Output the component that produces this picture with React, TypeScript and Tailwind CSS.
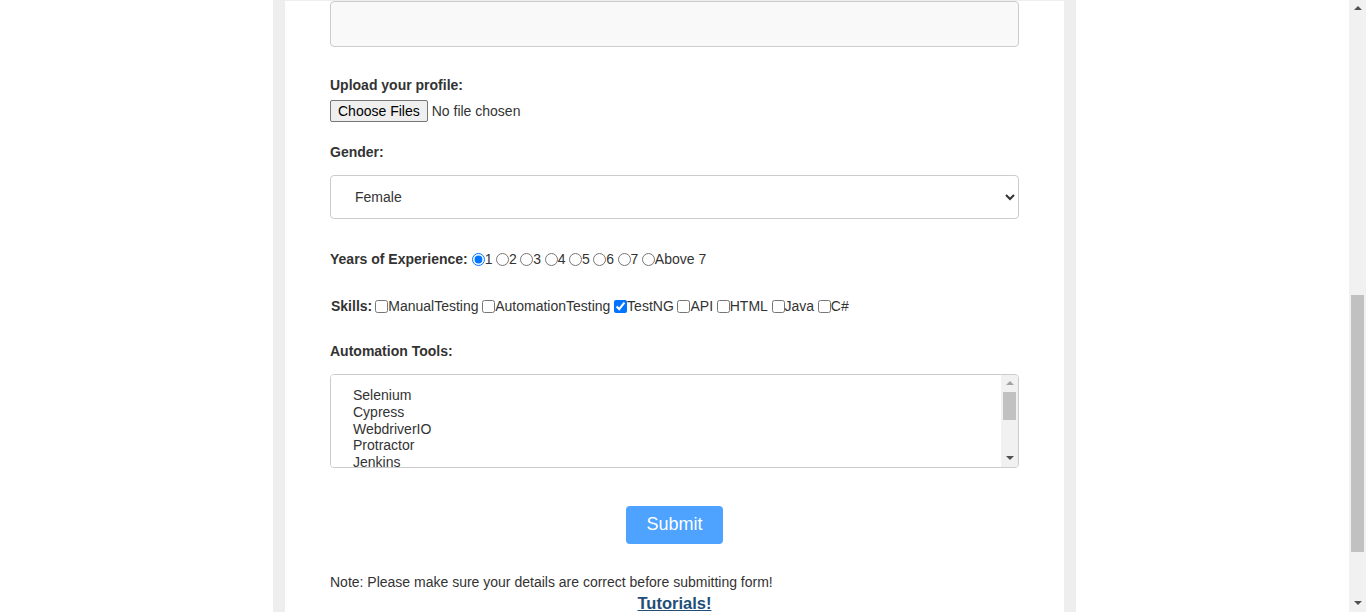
import React from "react";

const years = ["1", "2", "3", "4", "5", "6", "7", "Above 7"];
const skills = ["ManualTesting", "AutomationTesting", "TestNG", "API", "HTML", "Java", "C#"];
const tools = [
  "Selenium",
  "Cypress",
  "WebdriverIO",
  "Protractor",
  "Jenkins",
  "TestNG",
  "Postman",
  "Appium",
  "JMeter",
  "Cucumber",
  "Katalon",
];

const UpArrow = ({ color = "#505050" }: { color?: string }) => (
  <svg width="8" height="5" viewBox="0 0 8 5">
    <path d="M4 0L8 4H0Z" fill={color} />
  </svg>
);

const DownArrow = () => (
  <svg width="8" height="5" viewBox="0 0 8 5">
    <path d="M0 0H8L4 4Z" fill="#505050" />
  </svg>
);

const App = () => {
  return (
    <div className="flex h-[612px] overflow-hidden bg-white font-['Liberation_Sans',Arial,sans-serif] text-[14px] leading-[16px] text-[#333]">
      <div className="flex flex-1 justify-center">
        <div className="w-[803px] bg-[#eee] px-[12px]">
          <form className="h-full bg-white px-[45px]" onSubmit={(e) => e.preventDefault()}>
            {/* address box, scrolled mostly out of view */}
            <textarea className="mt-[1px] block h-[46px] w-full resize-none rounded-[4px] border border-[#ccc] bg-[#f9f9f9]" />

            <label className="mt-[30px] block font-bold">Upload your profile:</label>
            <input
              type="file"
              multiple
              className="mt-[7px] block text-[14px] file:mr-[4px] file:rounded-[2px] file:border file:border-[#767676] file:bg-[#efefef] file:px-[7px] file:py-[2px] file:text-black"
            />

            <label className="mt-[22px] block font-bold">Gender:</label>
            <select
              defaultValue="Female"
              className="mt-[15px] block h-[44px] w-full rounded-[4px] border border-[#ccc] bg-white px-[20px] text-[#333]"
            >
              <option>Male</option>
              <option>Female</option>
              <option>Other</option>
            </select>

            <div className="mt-[32px] flex items-center">
              <span className="mr-[4px] font-bold">Years of Experience:</span>
              {years.map((y, i) => (
                <label key={y} className="mr-[3.5px] flex items-center">
                  <input
                    type="radio"
                    name="exp"
                    defaultChecked={i === 0}
                    className="m-0 h-[13px] w-[13px]"
                  />
                  <span>{y}</span>
                </label>
              ))}
            </div>

            <div className="mt-[31px] flex items-center pl-[1px]">
              <span className="mr-[3px] font-bold">Skills:</span>
              {skills.map((s) => (
                <label key={s} className="mr-[3.7px] flex items-center">
                  <input
                    type="checkbox"
                    defaultChecked={s === "TestNG"}
                    className="m-0 h-[13px] w-[13px]"
                  />
                  <span>{s}</span>
                </label>
              ))}
            </div>

            <label className="mt-[29px] block font-bold">Automation Tools:</label>
            <div className="mt-[15px] flex h-[94px] w-full overflow-hidden rounded-[4px] border border-[#ccc] bg-white">
              <select
                multiple
                className="block h-full flex-1 overflow-hidden border-0 bg-white px-[22px] py-[12px] text-[#333] outline-none"
              >
                {tools.map((t) => (
                  <option key={t}>{t}</option>
                ))}
              </select>
              {/* listbox scrollbar */}
              <div className="flex w-[17px] flex-col items-center bg-[#f1f1f1]">
                <div className="flex h-[17px] items-center justify-center">
                  <UpArrow color="#a3a3a3" />
                </div>
                <div className="h-[28px] w-[13px] bg-[#c1c1c1]" />
                <div className="mt-auto flex h-[17px] items-center justify-center">
                  <DownArrow />
                </div>
              </div>
            </div>

            <div className="mt-[38px] flex justify-center">
              <button
                type="submit"
                className="h-[38px] rounded-[4px] bg-[#4da3ff] px-[20px] pb-[3px] text-[18px] text-white"
              >
                Submit
              </button>
            </div>

            <p className="mt-[30px]">
              Note: Please make sure your details are correct before submitting form!
            </p>
            <div className="mt-[5px] text-center">
              <a href="#" className="text-[16.5px] font-bold text-[#1f4e79] underline">
                Tutorials!
              </a>
            </div>
          </form>
        </div>
      </div>

      {/* page scrollbar */}
      <div className="flex w-[17px] flex-col items-center bg-[#f1f1f1]">
        <div className="flex h-[17px] items-center justify-center">
          <UpArrow />
        </div>
        <div className="mt-[278px] h-[257px] w-[13px] bg-[#c1c1c1]" />
        <div className="mt-auto flex h-[17px] items-center justify-center">
          <DownArrow />
        </div>
      </div>
    </div>
  );
};

export default App;
